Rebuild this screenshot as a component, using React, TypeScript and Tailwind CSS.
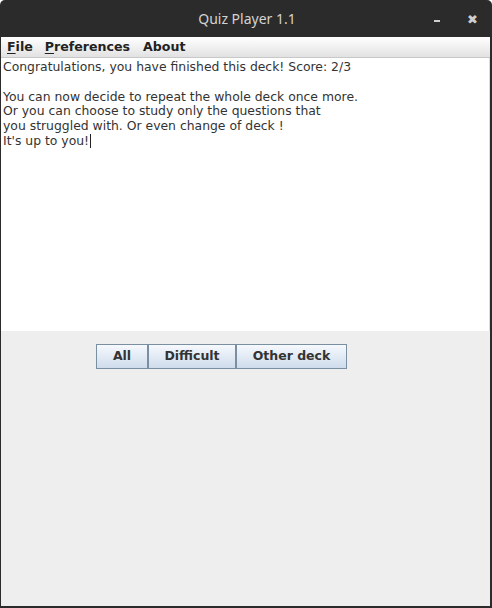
import React from "react";

export default function App() {
  const font = { fontFamily: '"DejaVu Sans", sans-serif' };
  return (
    <div className="w-[492px] h-[608px] bg-[#2b2b2b] flex flex-col rounded-t-[5px] overflow-hidden" style={font}>
      {/* Title bar */}
      <div className="h-[37px] shrink-0 flex items-center relative">
        <div className="flex-1 text-center text-[14px] text-[#d3d3d3] pl-[2px]" style={{ fontFamily: '"Noto Sans", "DejaVu Sans", sans-serif' }}>
          Quiz Player 1.1
        </div>
        <div className="absolute left-[434px] top-[20px] w-[6px] h-[2px] bg-[#cfcfcf]" />
        <div className="absolute left-[467px] top-[13px] text-[13px] font-bold text-[#cfcfcf] leading-none">✖</div>
      </div>
      {/* Window body */}
      <div className="flex-1 flex flex-col ml-[1px] mr-[2px] mb-[2px] bg-[#eeeeee]">
        {/* Menu bar */}
        <div className="h-[21px] shrink-0 flex items-center bg-gradient-to-b from-[#ffffff] to-[#e2e2e2] border-b border-[#c8c8c8] text-[12.6px] font-bold text-[#222222]">
          <span className="ml-[6px]"><span className="underline underline-offset-2">F</span>ile</span>
          <span className="ml-[12px]"><span className="underline underline-offset-2">P</span>references</span>
          <span className="ml-[13px]">About</span>
        </div>
        {/* Text area */}
        <div className="h-[273px] shrink-0 bg-white border-r border-[#dcdcdc] pt-[2px] pl-[2px] text-[12.4px] leading-[14.8px] text-[#333333]">
          <div>Congratulations, you have finished this deck! Score: 2/3</div>
          <div>&nbsp;</div>
          <div>You can now decide to repeat the whole deck once more.</div>
          <div>Or you can choose to study only the questions that</div>
          <div>you struggled with. Or even change of deck !</div>
          <div className="flex items-center">
            It's up to you!<span className="inline-block w-[1px] h-[14px] bg-[#222222] ml-[1px]" />
          </div>
        </div>
        {/* Buttons */}
        <div className="flex pl-[95px] pt-[13px]">
          <div className="flex h-[25px] border border-[#7b8fa3] text-[12.5px] font-bold text-[#333333]">
            <div className="w-[50px] flex items-center justify-center bg-gradient-to-b from-[#f6f9fd] to-[#cfdcec]">All</div>
            <div className="w-[88px] flex items-center justify-center border-l-2 border-[#7b8fa3] bg-gradient-to-b from-[#f6f9fd] to-[#cfdcec]">Difficult</div>
            <div className="w-[111px] flex items-center justify-center border-l-2 border-[#7b8fa3] bg-gradient-to-b from-[#f6f9fd] to-[#cfdcec]">Other deck</div>
          </div>
        </div>
      </div>
    </div>
  );
}
